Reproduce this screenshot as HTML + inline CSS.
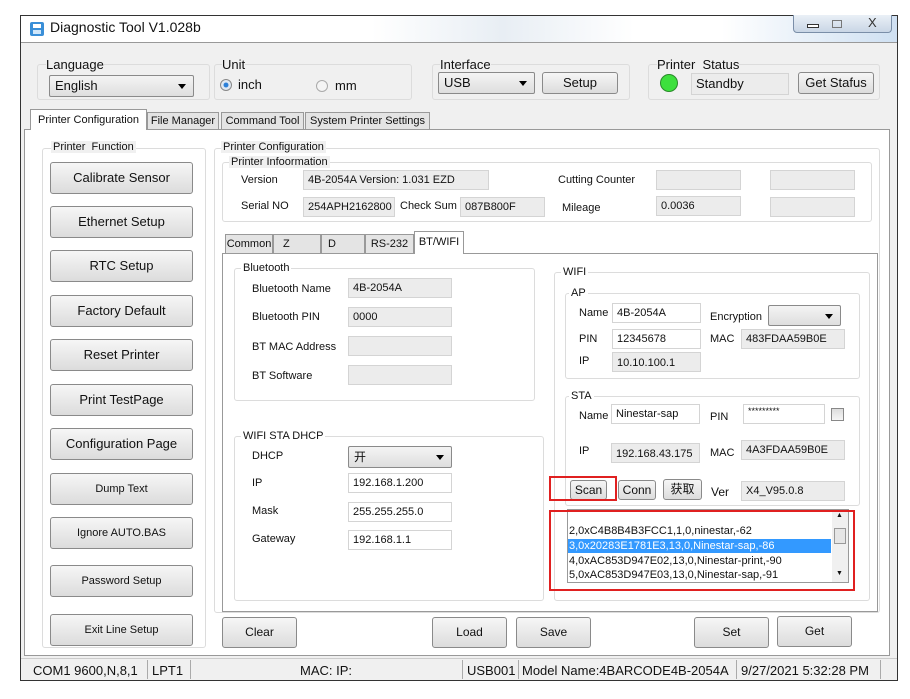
<!DOCTYPE html>
<html><head><meta charset="utf-8"><style>
*{box-sizing:border-box;margin:0;padding:0}
body{width:910px;height:699px;background:#fff;position:relative;overflow:hidden;font-family:"Liberation Sans","Noto Sans CJK SC",sans-serif;font-size:12px;color:#111}
.a{position:absolute}
.win{left:20px;top:15px;width:878px;height:666px;border:1px solid #333;background:#f0f0f0}
.title{left:21px;top:16px;width:876px;height:27px;background:linear-gradient(90deg,#fff 0%,#fff 40%,#e8eef4 55%,#fff 70%,#fff 80%,#cfe0f2 100%);border-bottom:1px solid #999}
.g{position:absolute;border:1px solid #dcdcdc;border-radius:3px}
.gl{position:absolute;background:#f0f0f0;padding:0 2px;font-size:11px;line-height:12px}
.btn{position:absolute;border:1px solid #8a8a8a;border-radius:3px;background:linear-gradient(#f6f6f6,#dcdcdc);text-align:center;font-size:12px}
.tb{position:absolute;border:1px solid #d4d4d4;background:#ececec;font-size:11px;padding-left:4px}
.cb{position:absolute;border:1px solid #8a8a8a;border-radius:2px;background:linear-gradient(#f4f4f4,#dedede);padding-left:5px}
.cb:after{content:"";position:absolute;right:7px;top:50%;margin-top:-2px;border:4px solid transparent;border-top:5px solid #000;border-bottom:0}
.l{position:absolute;font-size:11px;white-space:nowrap}
.tab{position:absolute;border:1px solid #999;border-bottom:none;background:#e4e4e4;font-size:11px;text-align:center;line-height:18px}
.red{position:absolute;border:2px solid #e02020}
</style></head><body>
<div class="a win"></div>
<div class="a title"></div>
<div class="a" style="left:30px;top:22px;width:14px;height:14px;background:#3a8fd8;border-radius:2px"><div class="a" style="left:3px;top:2px;width:8px;height:4px;background:#fff"></div><div class="a" style="left:3px;top:8px;width:8px;height:4px;background:#cfe6fa"></div></div>
<div class="a" style="left:50px;top:19px;font-size:14px">Diagnostic Tool V1.028b</div>
<div class="a" style="left:793px;top:15px;width:99px;height:18px;border:1px solid #7a8ea8;border-top:none;border-radius:0 0 4px 4px;background:linear-gradient(#eaf0f7,#c9d6e6)"></div>
<div class="a" style="left:807px;top:24px;width:12px;height:4px;border:1px solid #333;background:#fff"></div>
<div class="a" style="left:832px;top:20px;width:10px;height:8px;border:1px solid #777"></div>
<div class="a" style="left:868px;top:15px;font-size:13px;color:#333">X</div>

<!-- top groups -->
<div class="g" style="left:37px;top:64px;width:173px;height:36px"></div>
<div class="a" style="left:46px;top:57px;font-size:13px;background:#f0f0f0">Language</div>
<div class="cb" style="left:49px;top:75px;width:145px;height:22px;font-size:13px;line-height:20px">English</div>
<div class="g" style="left:214px;top:64px;width:198px;height:36px"></div>
<div class="a" style="left:222px;top:57px;font-size:13px;background:#f0f0f0">Unit</div>
<div class="a" style="left:220px;top:79px;width:12px;height:12px;border-radius:50%;border:1px solid #888;background:radial-gradient(#2a7fd8 30%,#dfe8f2 40%)"></div>
<div class="a" style="left:238px;top:77px;font-size:13px">inch</div>
<div class="a" style="left:316px;top:80px;width:12px;height:12px;border-radius:50%;border:1px solid #aaa;background:#f4f4f4"></div>
<div class="a" style="left:335px;top:78px;font-size:13px">mm</div>
<div class="g" style="left:432px;top:64px;width:198px;height:36px"></div>
<div class="a" style="left:440px;top:57px;font-size:13px;background:#f0f0f0">Interface</div>
<div class="cb" style="left:438px;top:72px;width:97px;height:22px;font-size:13px;line-height:20px">USB</div>
<div class="btn" style="left:542px;top:72px;width:76px;height:22px;font-size:13px;line-height:20px">Setup</div>
<div class="g" style="left:648px;top:64px;width:232px;height:36px"></div>
<div class="a" style="left:657px;top:57px;font-size:13px;background:#f0f0f0">Printer &nbsp;Status</div>
<div class="a" style="left:660px;top:74px;width:18px;height:18px;border-radius:50%;background:#3de03d;border:1px solid #2a8a2a"></div>
<div class="tb" style="left:691px;top:73px;width:98px;height:22px;font-size:13px;line-height:20px;padding-left:4px">Standby</div>
<div class="btn" style="left:798px;top:72px;width:76px;height:22px;font-size:13px;line-height:20px">Get Stafus</div>

<!-- main tabs -->
<div class="a" style="left:24px;top:129px;width:866px;height:527px;border:1px solid #999;background:#fff"></div>
<div class="tab" style="left:30px;top:109px;width:117px;height:21px;background:#fff;line-height:20px">Printer Configuration</div>
<div class="tab" style="left:147px;top:112px;width:72px;height:17px;line-height:17px">File Manager</div>
<div class="tab" style="left:221px;top:112px;width:83px;height:17px;line-height:17px">Command Tool</div>
<div class="tab" style="left:305px;top:112px;width:125px;height:17px;line-height:17px">System Printer Settings</div>

<!-- printer function -->
<div class="g" style="left:42px;top:148px;width:164px;height:500px"></div>
<div class="gl" style="left:51px;top:141px">Printer &nbsp;Function</div>
<div class="btn" style="left:50px;top:162px;width:143px;height:32px;line-height:30px;font-size:13px">Calibrate Sensor</div>
<div class="btn" style="left:50px;top:206px;width:143px;height:32px;line-height:30px;font-size:13px">Ethernet Setup</div>
<div class="btn" style="left:50px;top:250px;width:143px;height:32px;line-height:30px;font-size:13px">RTC Setup</div>
<div class="btn" style="left:50px;top:295px;width:143px;height:32px;line-height:30px;font-size:13px">Factory Default</div>
<div class="btn" style="left:50px;top:339px;width:143px;height:32px;line-height:30px;font-size:13px">Reset Printer</div>
<div class="btn" style="left:50px;top:384px;width:143px;height:32px;line-height:30px;font-size:13px">Print TestPage</div>
<div class="btn" style="left:50px;top:428px;width:143px;height:32px;line-height:30px;font-size:13px">Configuration Page</div>
<div class="btn" style="left:50px;top:473px;width:143px;height:32px;line-height:30px;font-size:11px">Dump Text</div>
<div class="btn" style="left:50px;top:517px;width:143px;height:32px;line-height:30px;font-size:11px">Ignore AUTO.BAS</div>
<div class="btn" style="left:50px;top:565px;width:143px;height:32px;line-height:30px;font-size:11px">Password Setup</div>
<div class="btn" style="left:50px;top:614px;width:143px;height:32px;line-height:30px;font-size:11px">Exit Line Setup</div>

<!-- printer configuration -->
<div class="g" style="left:214px;top:148px;width:666px;height:465px"></div>
<div class="gl" style="left:221px;top:141px">Printer Configuration</div>
<div class="g" style="left:222px;top:162px;width:650px;height:60px"></div>
<div class="gl" style="left:229px;top:156px">Printer Infoormation</div>
<div class="l" style="left:241px;top:174px">Version</div>
<div class="tb" style="left:303px;top:170px;width:186px;height:20px;line-height:18px">4B-2054A Version: 1.031 EZD</div>
<div class="l" style="left:241px;top:200px">Serial NO</div>
<div class="tb" style="left:303px;top:197px;width:92px;height:20px;line-height:18px;overflow:hidden">254APH2162800</div>
<div class="l" style="left:400px;top:200px">Check Sum</div>
<div class="tb" style="left:460px;top:197px;width:85px;height:20px;line-height:18px">087B800F</div>
<div class="l" style="left:558px;top:174px">Cutting Counter</div>
<div class="tb" style="left:656px;top:170px;width:85px;height:20px"></div>
<div class="tb" style="left:770px;top:170px;width:85px;height:20px"></div>
<div class="l" style="left:562px;top:202px">Mileage</div>
<div class="tb" style="left:656px;top:196px;width:85px;height:20px;line-height:18px">0.0036</div>
<div class="tb" style="left:770px;top:197px;width:85px;height:20px"></div>

<!-- inner tabs -->
<div class="a" style="left:222px;top:253px;width:656px;height:359px;border:1px solid #999;background:#fff"></div>
<div class="tab" style="left:225px;top:234px;width:48px;height:19px">Common</div>
<div class="tab" style="left:273px;top:234px;width:48px;height:19px;text-align:left;padding-left:9px">Z</div>
<div class="tab" style="left:321px;top:234px;width:44px;height:19px;text-align:left;padding-left:6px">D</div>
<div class="tab" style="left:365px;top:234px;width:49px;height:19px">RS-232</div>
<div class="tab" style="left:414px;top:231px;width:50px;height:23px;background:#fff;line-height:20px">BT/WIFI</div>

<!-- bluetooth -->
<div class="g" style="left:234px;top:268px;width:301px;height:133px"></div>
<div class="gl" style="left:241px;top:262px;background:#fff">Bluetooth</div>
<div class="l" style="left:252px;top:283px">Bluetooth Name</div>
<div class="tb" style="left:348px;top:278px;width:104px;height:20px;line-height:18px">4B-2054A</div>
<div class="l" style="left:252px;top:311px">Bluetooth PIN</div>
<div class="tb" style="left:348px;top:307px;width:104px;height:20px;line-height:18px">0000</div>
<div class="l" style="left:252px;top:341px">BT MAC Address</div>
<div class="tb" style="left:348px;top:336px;width:104px;height:20px"></div>
<div class="l" style="left:252px;top:370px">BT Software</div>
<div class="tb" style="left:348px;top:365px;width:104px;height:20px"></div>

<!-- dhcp -->
<div class="g" style="left:234px;top:436px;width:310px;height:165px"></div>
<div class="gl" style="left:241px;top:430px;background:#fff">WIFI STA DHCP</div>
<div class="l" style="left:252px;top:450px">DHCP</div>
<div class="cb" style="left:348px;top:446px;width:104px;height:22px;line-height:20px">开</div>
<div class="l" style="left:252px;top:477px">IP</div>
<div class="tb" style="left:348px;top:473px;width:104px;height:20px;line-height:18px;background:#fff">192.168.1.200</div>
<div class="l" style="left:252px;top:505px">Mask</div>
<div class="tb" style="left:348px;top:502px;width:104px;height:20px;line-height:18px;background:#fff">255.255.255.0</div>
<div class="l" style="left:252px;top:533px">Gateway</div>
<div class="tb" style="left:348px;top:530px;width:104px;height:20px;line-height:18px;background:#fff">192.168.1.1</div>

<!-- wifi -->
<div class="g" style="left:554px;top:272px;width:316px;height:329px"></div>
<div class="gl" style="left:561px;top:266px;background:#fff">WIFI</div>
<div class="g" style="left:565px;top:293px;width:295px;height:86px"></div>
<div class="gl" style="left:569px;top:287px;background:#fff">AP</div>
<div class="l" style="left:579px;top:307px">Name</div>
<div class="tb" style="left:612px;top:303px;width:89px;height:20px;line-height:18px;background:#fff">4B-2054A</div>
<div class="l" style="left:710px;top:311px">Encryption</div>
<div class="cb" style="left:768px;top:305px;width:73px;height:21px"></div>
<div class="l" style="left:579px;top:333px">PIN</div>
<div class="tb" style="left:612px;top:329px;width:89px;height:20px;line-height:18px;background:#fff">12345678</div>
<div class="l" style="left:710px;top:333px">MAC</div>
<div class="tb" style="left:741px;top:329px;width:104px;height:20px;line-height:18px">483FDAA59B0E</div>
<div class="l" style="left:579px;top:355px">IP</div>
<div class="tb" style="left:612px;top:352px;width:89px;height:20px;line-height:20px">10.10.100.1</div>

<div class="g" style="left:565px;top:396px;width:295px;height:110px"></div>
<div class="gl" style="left:569px;top:390px;background:#fff">STA</div>
<div class="l" style="left:579px;top:410px">Name</div>
<div class="tb" style="left:611px;top:404px;width:89px;height:20px;line-height:18px;background:#fff">Ninestar-sap</div>
<div class="l" style="left:710px;top:411px">PIN</div>
<div class="tb" style="left:743px;top:404px;width:82px;height:20px;line-height:12px;background:#fff;font-size:9px">*********</div>
<div class="a" style="left:831px;top:408px;width:13px;height:13px;border:1px solid #888;background:linear-gradient(#ddd,#f6f6f6)"></div>
<div class="l" style="left:579px;top:445px">IP</div>
<div class="tb" style="left:611px;top:443px;width:89px;height:20px;line-height:20px">192.168.43.175</div>
<div class="l" style="left:710px;top:447px">MAC</div>
<div class="tb" style="left:741px;top:440px;width:104px;height:20px;line-height:18px">4A3FDAA59B0E</div>
<div class="btn" style="left:570px;top:480px;width:37px;height:20px;line-height:18px">Scan</div>
<div class="red" style="left:549px;top:476px;width:68px;height:25px"></div>
<div class="btn" style="left:618px;top:480px;width:38px;height:20px;line-height:18px">Conn</div>
<div class="btn" style="left:663px;top:479px;width:39px;height:21px;line-height:19px">获取</div>
<div class="l" style="left:711px;top:485px;font-size:12px">Ver</div>
<div class="tb" style="left:741px;top:481px;width:104px;height:20px;line-height:18px">X4_V95.0.8</div>
<div class="a" style="left:567px;top:509px;width:282px;height:74px;border:1px solid #999;background:#fff"></div>
<div class="l" style="left:569px;top:525px">2,0xC4B8B4B3FCC1,1,0,ninestar,-62</div>
<div class="a" style="left:568px;top:539px;width:263px;height:14px;background:#3399ff"></div>
<div class="l" style="left:569px;top:540px;color:#fff">3,0x20283E1781E3,13,0,Ninestar-sap,-86</div>
<div class="l" style="left:569px;top:555px">4,0xAC853D947E02,13,0,Ninestar-print,-90</div>
<div class="l" style="left:569px;top:569px">5,0xAC853D947E03,13,0,Ninestar-sap,-91</div>
<div class="a" style="left:832px;top:510px;width:16px;height:72px;background:#f0f0f0"></div>
<div class="a" style="left:834px;top:528px;width:12px;height:16px;border:1px solid #999;background:#e6e6e6"></div>
<div class="l" style="left:836px;top:512px;font-size:7px">▲</div>
<div class="l" style="left:836px;top:570px;font-size:7px">▼</div>
<div class="red" style="left:549px;top:510px;width:306px;height:81px"></div>

<!-- bottom buttons -->
<div class="btn" style="left:222px;top:617px;width:75px;height:31px;line-height:29px">Clear</div>
<div class="btn" style="left:432px;top:617px;width:75px;height:31px;line-height:29px">Load</div>
<div class="btn" style="left:516px;top:617px;width:75px;height:31px;line-height:29px">Save</div>
<div class="btn" style="left:694px;top:617px;width:75px;height:31px;line-height:29px">Set</div>
<div class="btn" style="left:777px;top:616px;width:75px;height:31px;line-height:29px">Get</div>

<!-- status bar -->
<div class="a" style="left:21px;top:658px;width:876px;height:22px;background:#f0f0f0;border-top:1px solid #ccc"></div>
<div class="a" style="left:33px;top:663px;font-size:13px">COM1 9600,N,8,1</div>
<div class="a" style="left:147px;top:660px;width:1px;height:19px;background:#aaa"></div>
<div class="a" style="left:152px;top:663px;font-size:13px">LPT1</div>
<div class="a" style="left:190px;top:660px;width:1px;height:19px;background:#aaa"></div>
<div class="a" style="left:300px;top:663px;font-size:13px">MAC: IP:</div>
<div class="a" style="left:462px;top:660px;width:1px;height:19px;background:#aaa"></div>
<div class="a" style="left:467px;top:663px;font-size:13px">USB001</div>
<div class="a" style="left:518px;top:660px;width:1px;height:19px;background:#aaa"></div>
<div class="a" style="left:522px;top:663px;font-size:13px">Model Name:4BARCODE4B-2054A</div>
<div class="a" style="left:736px;top:660px;width:1px;height:19px;background:#aaa"></div>
<div class="a" style="left:741px;top:663px;font-size:13px">9/27/2021 5:32:28 PM</div>
<div class="a" style="left:880px;top:660px;width:1px;height:19px;background:#aaa"></div>
</body></html>
